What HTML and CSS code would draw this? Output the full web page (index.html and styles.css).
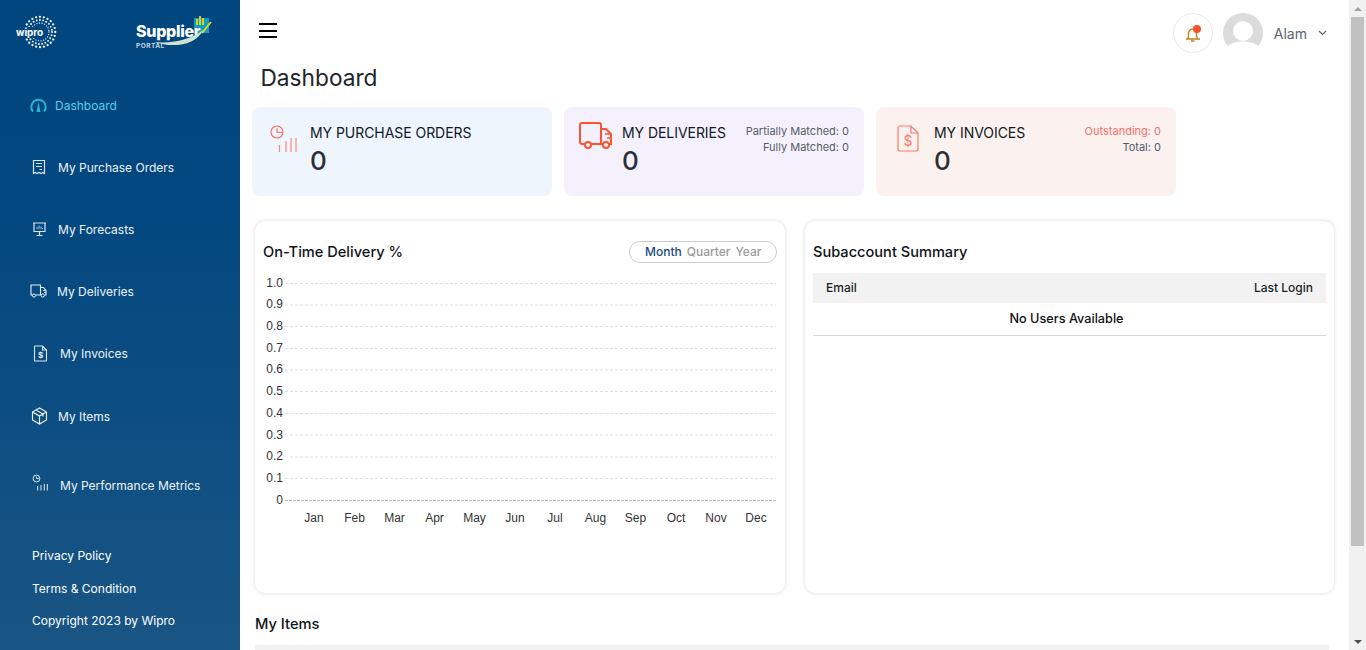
FILE: index.html
```html
<!DOCTYPE html>
<html lang="en">
<head>
<meta charset="utf-8">
<title>Dashboard</title>
<link rel="stylesheet" href="styles.css">
</head>
<body>
<div class="app">
  <aside class="sidebar">
    <div class="brand">
      <svg class="wipro" width="44" height="36" viewBox="0 0 44 36">
        <g fill="none" stroke="#fff" stroke-linecap="round">
          <circle cx="24" cy="18" r="15.2" stroke-width="2.3" stroke-dasharray="0 3.95"/>
          <circle cx="24" cy="18" r="12" stroke-width="1.9" stroke-dasharray="0 3.3"/>
          <circle cx="24" cy="18" r="9" stroke-width="1.3" stroke-dasharray="0 2.6"/>
        </g>
        <rect x="0" y="13" width="29" height="10" fill="#01467f"/>
        <text x="0" y="22" class="wipro-text">wipro</text>
      </svg>
      <svg class="supplier" width="78" height="38" viewBox="0 0 78 38">
        <rect x="58" y="3" width="15" height="15" fill="#12a0b8"/>
        <path d="M61 10V4M64 10V1M67 10V3" stroke="#f2d21f" stroke-width="1.8"/>
        <path d="M66 18L75 7" stroke="#f2d21f" stroke-width="1.8"/>
        <text x="0" y="22" class="supplier-text">Supplier</text>
        <path d="M18 27C38 29 56 24 67 15C60 31 36 33 18 27Z" fill="#cfe3d0"/>
        <text x="0" y="33" class="portal-text">PORTAL</text>
      </svg>
    </div>
    <nav class="nav">
      <a class="nav-item active pad-dash">
        <svg class="nav-icon" width="17" height="16" viewBox="0 0 17 16"><path d="M3 14.5A7.2 7.2 0 1 1 14 14.5" fill="none" stroke="#29b5d8" stroke-width="2"/><path d="M8.5 5L10.5 15H6.5Z" fill="#29b5d8"/></svg>
        <span>Dashboard</span>
      </a>
      <a class="nav-item pad-po">
        <svg class="nav-icon" width="14" height="16" viewBox="0 0 14 16"><path d="M1.5 1.5H12.5V14.5L10.7 13.5L9 14.5L7 13.5L5 14.5L3.3 13.5L1.5 14.5Z" fill="none" stroke="#d8e4ee" stroke-width="1.2"/><path d="M4 4.5H10M4 7.5H10M7.5 10.5H10" stroke="#d8e4ee" stroke-width="1"/></svg>
        <span>My Purchase Orders</span>
      </a>
      <a class="nav-item pad-fc">
        <svg class="nav-icon" width="15" height="15" viewBox="0 0 15 15"><path d="M1 1H14M2 1V9.5H13V1" fill="none" stroke="#d8e4ee" stroke-width="1.2"/><path d="M7.5 10V13M4.5 13.5H10.5" stroke="#d8e4ee" stroke-width="1.2"/><path d="M5 7V5M7 7V3.5M9 7V4.5M10.5 7V6" stroke="#d8e4ee" stroke-width=".8"/></svg>
        <span>My Forecasts</span>
      </a>
      <a class="nav-item pad-dl">
        <svg class="nav-icon" width="17" height="14" viewBox="0 0 17 14"><path d="M2.5 11H1V1H10.5V11H6M10.5 3.5H13.5L16 6.5V11H14.5M10.5 11H11" fill="none" stroke="#e6eef5" stroke-width="1.1"/><circle cx="4" cy="11.5" r="1.6" fill="none" stroke="#e6eef5" stroke-width="1"/><circle cx="12.8" cy="11.5" r="1.6" fill="none" stroke="#e6eef5" stroke-width="1"/><path d="M13 6.5H16M14 8.5H16" stroke="#e6eef5" stroke-width=".9"/></svg>
        <span>My Deliveries</span>
      </a>
      <a class="nav-item pad-inv">
        <svg class="nav-icon" width="15" height="17" viewBox="0 0 15 17"><path d="M2 1H9.5L13.5 5V15.5C13.5 16 13 16 13 16H2C1.5 16 1.5 15.5 1.5 15.5V1.5C1.5 1 2 1 2 1ZM9.5 1V5H13.5" fill="none" stroke="#d8e4ee" stroke-width="1.1"/><text x="7.5" y="13" text-anchor="middle" class="dollar">$</text></svg>
        <span>My Invoices</span>
      </a>
      <a class="nav-item pad-items">
        <svg class="nav-icon" width="17" height="18" viewBox="0 0 17 18"><path d="M8.5 1L15.5 5V13L8.5 17L1.5 13V5ZM1.5 5L8.5 9L15.5 5M8.5 9V17M5 3L12 7V9.5" fill="none" stroke="#f0f5f9" stroke-width="1.1"/></svg>
        <span>My Items</span>
      </a>
      <a class="nav-item pad-perf">
        <svg class="nav-icon icon-raised" width="18" height="18" viewBox="0 0 18 18"><circle cx="4.5" cy="5.5" r="3.4" fill="none" stroke="#dfe8f0" stroke-width="1"/><path d="M4.5 3.5V5.5H7" fill="none" stroke="#dfe8f0" stroke-width=".9"/><path d="M5.7 13V17.5M9 12V17.5M12.3 11V17.5M15.3 11V17.5" stroke="#dfe8f0" stroke-width="1"/></svg>
        <span>My Performance Metrics</span>
      </a>
    </nav>
    <div class="side-footer">
      <a>Privacy Policy</a>
      <a>Terms &amp; Condition</a>
      <a>Copyright 2023 by Wipro</a>
    </div>
  </aside>

  <main class="main">
    <header class="topbar">
      <button class="burger" aria-label="Menu"><i></i><i></i><i></i></button>
      <div class="user">
        <span class="bell">
          <svg width="18" height="18" viewBox="0 0 18 18"><path d="M2 15H16M4 15C5 12.5 4 10 5 7.5C6 5.5 7 5 8.5 5C10 5 11 5.5 12 7.5C13 10 12 12.5 13.5 15M7 17H10.5" fill="none" stroke="#b8861f" stroke-width="1.4"/><circle cx="13" cy="5" r="4" fill="#f4512c"/></svg>
        </span>
        <span class="avatar">
          <svg width="40" height="40" viewBox="0 0 40 40"><circle cx="20" cy="20" r="20" fill="#dcdcdc"/><circle cx="20" cy="18" r="10" fill="#fff"/><path d="M5 33C10 27 30 27 35 33C30 44 10 44 5 33Z" fill="#fff"/></svg>
        </span>
        <span class="user-name">Alam</span>
        <svg class="chev" width="9" height="6" viewBox="0 0 9 6"><path d="M1 1L4.5 4.5L8 1" fill="none" stroke="#5a6472" stroke-width="1.2"/></svg>
      </div>
    </header>
    <h1 class="page-title">Dashboard</h1>

    <section class="cards">
      <article class="card card-blue">
        <div class="card-icon icon-po">
          <svg width="30" height="30" viewBox="0 0 30 30"><circle cx="7" cy="7" r="6" fill="none" stroke="#fb6a5a" stroke-width="1.1"/><path d="M7 3V7.2H12" fill="none" stroke="#fb6a5a" stroke-width="1.1"/><path d="M9.5 20V27M16 16V27M21 13V27M26 13V27" stroke="#fb8a7c" stroke-width="1.2"/></svg>
        </div>
        <div class="card-body"><h2>MY PURCHASE ORDERS</h2><strong>0</strong></div>
      </article>
      <article class="card card-purple">
        <div class="card-icon icon-truck">
          <svg width="34" height="28" viewBox="0 0 34 28"><path d="M6 22H3C1.5 22 1 21 1 20V3C1 2 2 1 3 1H20C21 1 22 2 22 3V22H12M22 7H27L32 12V22H30M22 22H24" fill="none" stroke="#fb5430" stroke-width="2"/><circle cx="9" cy="23" r="3" fill="none" stroke="#fb5430" stroke-width="2"/><circle cx="27" cy="23" r="3" fill="none" stroke="#fb5430" stroke-width="2"/><path d="M26 12H32M28 16H32" stroke="#fb5430" stroke-width="1.6"/></svg>
        </div>
        <div class="card-body"><h2>MY DELIVERIES</h2><strong>0</strong></div>
        <div class="card-side"><span>Partially Matched: 0</span><span>Fully Matched: 0</span></div>
      </article>
      <article class="card card-red">
        <div class="card-icon icon-inv">
          <svg width="22" height="27" viewBox="0 0 22 27"><path d="M3 1H14L21 8V24C21 25.5 20 26 19 26H3C2 26 1 25.5 1 24V3C1 2 2 1 3 1ZM14 1V8H21" fill="none" stroke="#fb7a68" stroke-width="1.2"/><text x="11" y="21" text-anchor="middle" class="dollar-big">$</text></svg>
        </div>
        <div class="card-body"><h2>MY INVOICES</h2><strong>0</strong></div>
        <div class="card-side"><span class="out">Outstanding: 0</span><span>Total: 0</span></div>
      </article>
    </section>

    <section class="panels">
      <article class="panel">
        <div class="panel-head">
          <h3>On-Time Delivery %</h3>
          <div class="range"><b>Month</b><span>Quarter</span><span>Year</span></div>
        </div>
        <svg class="chart" width="516" height="264" viewBox="0 -4 516 264">
          <g class="grid">
            <path d="M23 4.5H514M23 26H514M23 47.5H514M23 69.5H514M23 91H514M23 112.5H514M23 134.5H514M23 156H514M23 178H514M23 199.5H514"/>
          </g>
          <path class="base" d="M23 221.5H514"/>
          <g class="ylab" text-anchor="end">
            <text x="21" y="8">1.0</text><text x="21" y="29">0.9</text><text x="21" y="51">0.8</text><text x="21" y="73">0.7</text><text x="21" y="94">0.6</text><text x="21" y="116">0.5</text><text x="21" y="138">0.4</text><text x="21" y="160">0.3</text><text x="21" y="181">0.2</text><text x="21" y="203">0.1</text><text x="21" y="225">0</text>
          </g>
          <g class="xlab" text-anchor="middle">
            <text x="52" y="243">Jan</text><text x="92.5" y="243">Feb</text><text x="132.5" y="243">Mar</text><text x="172.5" y="243">Apr</text><text x="212.5" y="243">May</text><text x="253" y="243">Jun</text><text x="293" y="243">Jul</text><text x="333.5" y="243">Aug</text><text x="373.5" y="243">Sep</text><text x="414" y="243">Oct</text><text x="454" y="243">Nov</text><text x="494" y="243">Dec</text>
          </g>
        </svg>
      </article>
      <article class="panel panel-sub">
        <div class="panel-head"><h3>Subaccount Summary</h3></div>
        <div class="table">
          <div class="thead"><span>Email</span><span>Last Login</span></div>
          <div class="tempty">No Users Available</div>
        </div>
      </article>
    </section>

    <h3 class="items-title">My Items</h3>
    <div class="items-head"></div>
  </main>

  <div class="scrollbar">
    <span class="arrow arrow-up"></span>
    <span class="thumb"></span>
    <span class="arrow arrow-down"></span>
  </div>
</div>
</body>
</html>
```
FILE: styles.css
```css
* { box-sizing: border-box; }
html, body { margin: 0; height: 650px; overflow: hidden; background: #fff; }
body { font-family: Inter, "Liberation Sans", sans-serif; color: #212529; }
h1, h2, h3 { margin: 0; font-weight: 400; }

.app { display: flex; height: 650px; overflow: hidden; }

/* Sidebar */
.sidebar {
  width: 240px; flex: none; display: flex; flex-direction: column;
  background: linear-gradient(180deg, #01467f 0%, #024780 30%, #195584 100%);
  color: #fff;
}
.brand { height: 74px; display: flex; align-items: flex-start; padding: 14px 0 0 16px; }
.wipro { flex: none; }
.wipro-text { font: 700 10px Inter, sans-serif; fill: #fff; letter-spacing: -.1px; }
.supplier { flex: none; margin: 1px 0 0 76px; }
.supplier-text { font: 800 16px Inter, sans-serif; fill: #fff; letter-spacing: -.3px; }
.portal-text { font: 700 6.5px Inter, sans-serif; fill: #c9d6e2; letter-spacing: .5px; }

.nav { display: flex; flex-direction: column; }
.nav-item { height: 62px; display: flex; align-items: center; font-size: 12px; color: #eef3f7; }
.nav-item.active { color: #5dcdea; }
.nav-icon { flex: none; }
.pad-dash { padding-left: 30px; gap: 8px; }
.pad-po { padding-left: 32px; gap: 12px; }
.pad-fc { padding-left: 32px; gap: 11px; }
.pad-dl { padding-left: 30px; gap: 10px; }
.pad-inv { padding-left: 33px; gap: 12px; }
.pad-items { padding-left: 31px; gap: 10px; margin-top: 1px; }
.pad-perf { padding-left: 32px; gap: 10px; margin-top: 7px; }
.icon-raised { margin-top: -6px; }
.dollar { font: 700 8px Inter, sans-serif; fill: #e6eef5; }
.dollar-big { font: 400 14px Inter, sans-serif; fill: #fb7a68; }

.side-footer { margin-top: auto; padding: 0 0 21px 32px; display: flex; flex-direction: column; gap: 17px; font-size: 12px; line-height: 16px; color: #fff; }
.side-footer a:last-child { margin-top: -1px; }

/* Main */
.main { width: 1109px; flex: none; display: flex; flex-direction: column; overflow: hidden; background: #fff; }
.topbar { height: 63px; flex: none; display: flex; justify-content: space-between; align-items: flex-start; padding: 13px 22px 0 19px; }
.burger { border: 0; background: none; padding: 0; margin-top: 10px; width: 18px; height: 15px; display: flex; flex-direction: column; justify-content: space-between; }
.burger i { display: block; height: 2px; background: #000; }
.user { display: flex; align-items: center; }
.bell { width: 40px; height: 40px; border: 1px solid #e8e8e8; border-radius: 50%; display: flex; align-items: center; justify-content: center; margin-right: 10px; }
.avatar { width: 40px; height: 40px; display: block; }
.avatar svg { display: block; }
.user-name { font-size: 14px; color: #5a6472; margin-left: 11px; }
.chev { margin-left: 11px; }
.page-title { font-size: 22.7px; line-height: 29px; color: #212529; margin-left: 20.5px; }

/* Summary cards */
.cards { display: flex; gap: 12px; margin: 15px 0 0 12px; }
.card { width: 300px; height: 89px; border-radius: 8px; display: flex; padding-right: 15px; }
.card-blue { background: #eef5fd; }
.card-purple { background: #f4f1fc; }
.card-red { background: #fbf1ee; }
.card-icon { width: 58px; flex: none; display: flex; }
.card-icon svg { flex: none; }
.icon-po { padding: 18px 0 0 18px; }
.icon-truck { padding: 15px 0 0 15px; }
.icon-inv { padding: 18px 0 0 21px; }
.card-body { padding-top: 18px; flex: 1; }
.card-body h2 { font-size: 14px; line-height: 16px; letter-spacing: -.05px; color: #111827; }
.card-body strong { display: block; font-size: 26px; font-weight: 500; line-height: 32px; margin-top: 4px; color: #2b2f36; }
.card-side { padding-top: 16px; display: flex; flex-direction: column; align-items: flex-end; font-size: 11px; line-height: 16px; color: #555d68; }
.card-side .out { color: #f8706b; }

/* Panels */
.panels { display: flex; gap: 20px; margin: 25px 0 0 15px; }
.panel { width: 530px; height: 372px; border-radius: 10px; background: #fff; box-shadow: 0 0 4px rgba(0, 0, 0, .15); padding: 0 7px; }
.panel-sub { width: 529px; padding: 0 8px; }
.panel-head { height: 52px; display: flex; justify-content: space-between; align-items: center; padding: 9px 0 0 1px; }
.panel-sub .panel-head { padding-left: 0; }
.panel-head h3 { font-size: 14.6px; font-weight: 500; color: #101418; }
.range { width: 148px; height: 22px; border: 1px solid #ccc; border-radius: 11px; display: flex; align-items: center; gap: 5px; padding-left: 15px; font-size: 12px; color: #9a9a9a; margin-right: 1px; }
.range b { font-weight: 500; color: #1d4a84; }
.range span { font-weight: 500; }
.chart { display: block; margin: 2px 0 0 0; }
.chart .grid { fill: none; stroke: #e0e0e0; stroke-width: 1; stroke-dasharray: 3 2; }
.chart .base { fill: none; stroke: #bbb; stroke-width: 1; stroke-dasharray: 3 1; }
.chart text { font: 12px "Liberation Sans", Arial, sans-serif; fill: #333; }

.thead { height: 30px; background: #f2f2f2; display: flex; justify-content: space-between; align-items: center; padding: 0 13px 2px; font-size: 12px; font-weight: 500; color: #1c1f24; }
.tempty { height: 33px; border-bottom: 1px solid #d8d8d8; display: flex; align-items: center; justify-content: center; padding: 0 6px 2px 0; font-size: 12.7px; font-weight: 500; color: #111; }

.items-title { font-size: 14.7px; font-weight: 500; line-height: 20px; color: #101418; margin: 21px 0 0 15px; }
.items-head { height: 20px; width: 1074px; margin: 11px 0 0 15px; background: #f2f2f2; flex: none; }

/* Scrollbar */
.scrollbar { width: 17px; flex: none; height: 650px; background: #f1f1f1; display: flex; flex-direction: column; align-items: center; }
.arrow { width: 0; height: 0; flex: none; border-left: 4px solid transparent; border-right: 4px solid transparent; }
.arrow-up { border-bottom: 4px solid #a3a3a3; margin: 7px 0 6px; }
.thumb { width: 13px; height: 529px; background: #c1c1c1; flex: none; }
.arrow-down { border-top: 4px solid #505050; margin-top: auto; margin-bottom: 6px; }
```
